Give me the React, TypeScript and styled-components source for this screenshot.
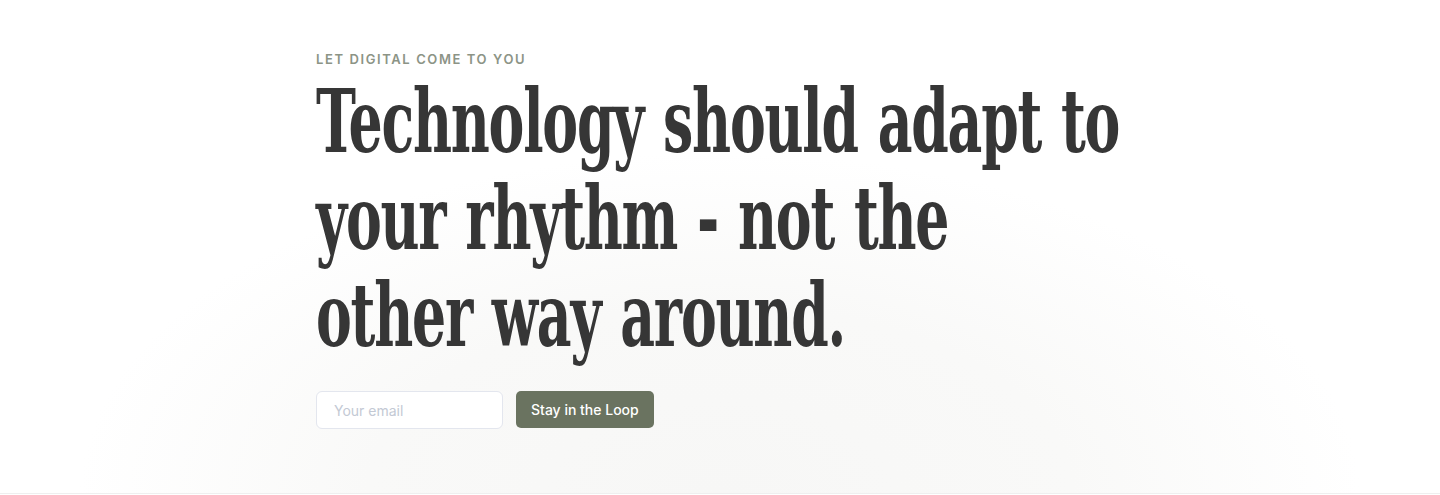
import React from "react";
import styled, { createGlobalStyle } from "styled-components";

const Global = createGlobalStyle`
  html, body { margin: 0; padding: 0; background: #ffffff; }
  * { box-sizing: border-box; }
`;

const Hero = styled.section`
  height: 494px;
  border-bottom: 1px solid #efefef;
  background: radial-gradient(ellipse 640px 340px at 50% 100%, #f7f7f6 0%, #f9f9f8 55%, #ffffff 100%);
  display: flex;
  justify-content: center;
  overflow: hidden;
`;

const Container = styled.div`
  width: 808px;
  padding-top: 51px;
  display: flex;
  flex-direction: column;
`;

const Eyebrow = styled.p`
  margin: 0;
  font-family: Inter, "Liberation Sans", sans-serif;
  font-size: 13px;
  font-weight: 600;
  letter-spacing: 1.6px;
  line-height: 16px;
  color: #8c9486;
  text-transform: uppercase;
`;

const Headline = styled.h1`
  margin: 6px 0 0;
  font-family: "DejaVu Serif", serif;
  font-weight: 700;
  font-size: 88px;
  line-height: 97px;
  letter-spacing: -2px;
  word-spacing: 4px;
  color: #363636;
  white-space: nowrap;
`;

const Line = styled.span`
  display: block;
  width: max-content;
  transform: scaleX(0.61);
  transform-origin: left top;
`;

const Form = styled.form`
  margin-top: 27px;
  display: flex;
  align-items: flex-start;
  gap: 13px;
`;

const EmailInput = styled.input`
  width: 187px;
  height: 38px;
  padding: 0 17px;
  border: 1px solid #e3e6ee;
  border-radius: 6px;
  background: #ffffff;
  font-family: Inter, "Liberation Sans", sans-serif;
  font-size: 14px;
  color: #333;
  outline: none;
  &::placeholder { color: #c3c9d4; }
`;

const Button = styled.button`
  height: 37px;
  padding: 0 15px;
  border: none;
  border-radius: 5px;
  background: #6a7360;
  color: #ffffff;
  font-family: Inter, "Liberation Sans", sans-serif;
  font-size: 14px;
  font-weight: 500;
  cursor: pointer;
`;

export default function App() {
  return (
    <>
      <Global />
      <Hero>
        <Container>
          <Eyebrow>Let digital come to you</Eyebrow>
          <Headline>
            <Line>Technology should adapt to</Line>
            <Line>your rhythm - not the</Line>
            <Line>other way around.</Line>
          </Headline>
          <Form onSubmit={(e) => e.preventDefault()}>
            <EmailInput type="email" placeholder="Your email" />
            <Button type="submit">Stay in the Loop</Button>
          </Form>
        </Container>
      </Hero>
    </>
  );
}
